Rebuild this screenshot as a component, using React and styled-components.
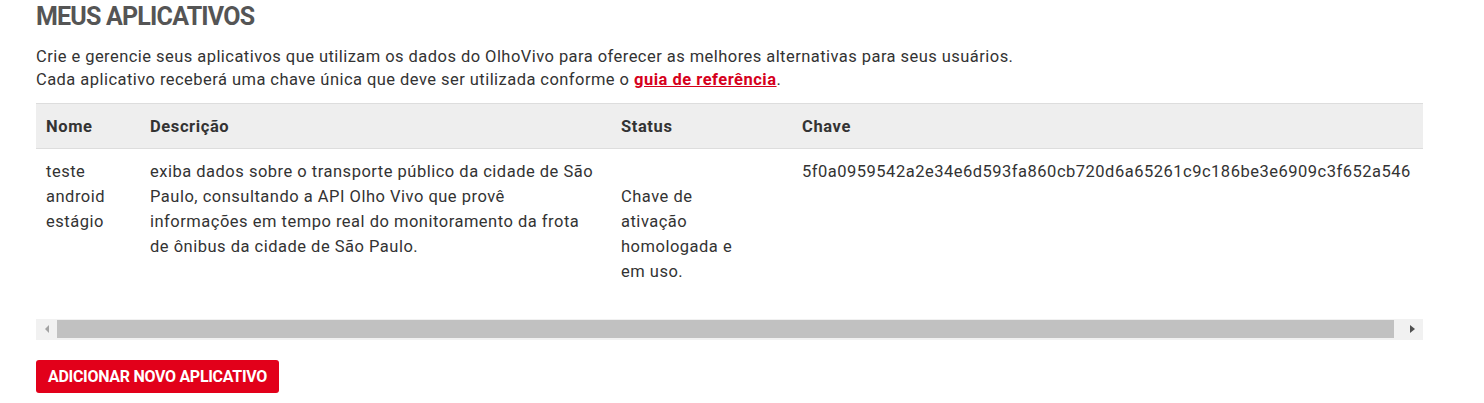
import React from 'react';
import styled, { createGlobalStyle } from 'styled-components';

const GlobalStyle = createGlobalStyle`
  body {
    margin: 0;
    background: #fff;
    font-family: Roboto, "Liberation Sans", Arial, sans-serif;
    color: #333;
  }
`;

const Page = styled.section`
  padding: 0 61px 0 36px;
`;

const Title = styled.h2`
  margin: 2px 0 0;
  font-size: 25px;
  line-height: 30px;
  font-weight: 700;
  letter-spacing: -0.8px;
  color: #555;
  text-transform: uppercase;
`;

const Intro = styled.p`
  margin: 13px 0 12px;
  font-size: 16.5px;
  letter-spacing: 0.45px;
  line-height: 23px;
  color: #333;
`;

const RefLink = styled.a`
  color: #d6001c;
  font-weight: 700;
  letter-spacing: 0.5px;
  text-decoration: underline;
`;

const TableWrap = styled.div`
  overflow: hidden;
`;

const Table = styled.table`
  width: 100%;
  border-collapse: collapse;
  border-top: 1px solid #ddd;
  font-size: 16.5px;
  letter-spacing: 0.5px;
`;

const Head = styled.th`
  background: #eee;
  border-bottom: 1px solid #ddd;
  text-align: left;
  font-weight: 700;
  letter-spacing: 0.6px;
  color: #333;
  line-height: 21px;
  padding: 12px 10px 11px;
  width: ${p => p.$w || 'auto'};
`;

const Row = styled.tr`
  height: 170px;
`;

const Cell = styled.td`
  padding: 10px 10px;
  line-height: 25px;
  color: #333;
  vertical-align: ${p => (p.$middle ? 'middle' : 'top')};
  white-space: ${p => (p.$nowrap ? 'nowrap' : 'normal')};
`;

const StatusText = styled.div`
  width: 122px;
`;

const Scrollbar = styled.div`
  display: flex;
  align-items: stretch;
  height: 21px;
  background: #f1f1f1;
`;

const ScrollButton = styled.div`
  width: 21px;
  display: flex;
  align-items: center;
  justify-content: center;
  flex-shrink: 0;
`;

const ScrollTrack = styled.div`
  flex: 1;
  display: flex;
  align-items: center;
  padding-right: 8px;
`;

const Thumb = styled.div`
  flex: 1;
  height: 18px;
  background: #c1c1c1;
`;

const Arrow = styled.span`
  width: 0;
  height: 0;
  border-top: 4px solid transparent;
  border-bottom: 4px solid transparent;
  ${p => (p.$dir === 'left'
    ? 'border-right: 4px solid #a3a3a3;'
    : 'border-left: 5px solid #505050;')}
`;

const AddButton = styled.button`
  margin-top: 20px;
  height: 33px;
  padding: 0 12px;
  border: none;
  border-radius: 3px;
  background: #e2001a;
  color: #fff;
  font-family: Roboto, "Liberation Sans", Arial, sans-serif;
  font-size: 16px;
  font-weight: 700;
  letter-spacing: -0.3px;
  text-transform: uppercase;
  cursor: pointer;
`;

const app = {
  nome: 'teste android estágio',
  descricao:
    'exiba dados sobre o transporte público da cidade de São Paulo, consultando a API Olho Vivo que provê informações em tempo real do monitoramento da frota de ônibus da cidade de São Paulo.',
  status: 'Chave de ativação homologada e em uso.',
  chave: '5f0a0959542a2e34e6d593fa860cb720d6a65261c9c186be3e6909c3f652a546',
};

export default function App() {
  return (
    <>
      <GlobalStyle />
      <Page>
        <Title>Meus aplicativos</Title>
        <Intro>
          Crie e gerencie seus aplicativos que utilizam os dados do OlhoVivo para oferecer as melhores alternativas para seus usuários.
          <br />
          Cada aplicativo receberá uma chave única que deve ser utilizada conforme o <RefLink href="#">guia de referência</RefLink>.
        </Intro>
        <TableWrap>
          <Table>
            <thead>
              <tr>
                <Head $w="84px">Nome</Head>
                <Head $w="451px">Descrição</Head>
                <Head $w="161px">Status</Head>
                <Head>Chave</Head>
              </tr>
            </thead>
            <tbody>
              <Row>
                <Cell>{app.nome}</Cell>
                <Cell>{app.descricao}</Cell>
                <Cell $middle><StatusText>{app.status}</StatusText></Cell>
                <Cell $nowrap>{app.chave}</Cell>
              </Row>
            </tbody>
          </Table>
        </TableWrap>
        <Scrollbar>
          <ScrollButton><Arrow $dir="left" /></ScrollButton>
          <ScrollTrack><Thumb /></ScrollTrack>
          <ScrollButton><Arrow $dir="right" /></ScrollButton>
        </Scrollbar>
        <AddButton>Adicionar novo aplicativo</AddButton>
      </Page>
    </>
  );
}
